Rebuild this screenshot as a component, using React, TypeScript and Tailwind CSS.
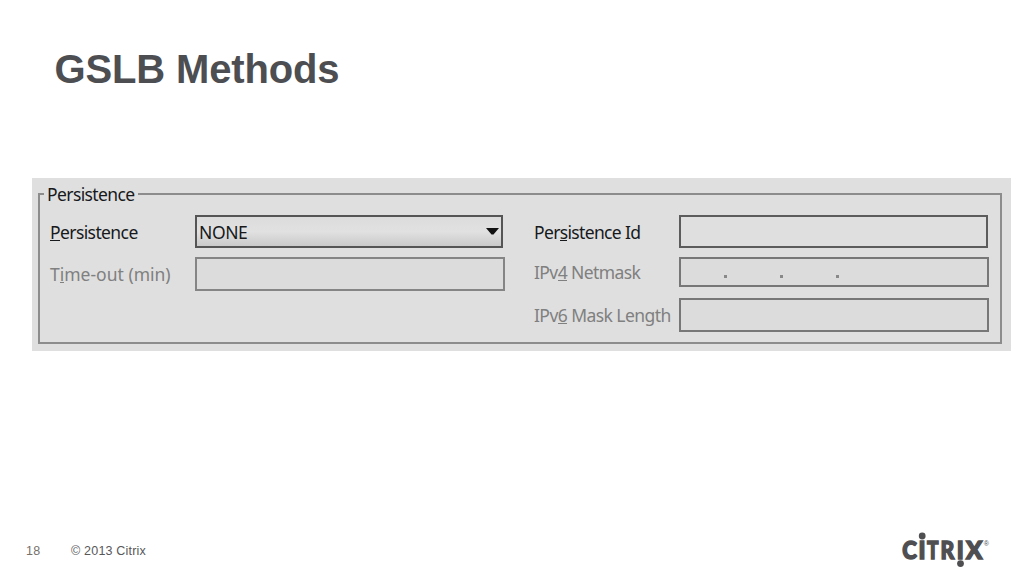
import React from "react";

type LabelProps = {
  before?: string;
  hotkey: string;
  after: string;
  className?: string;
};

function Label({ before = "", hotkey, after, className = "" }: LabelProps) {
  return (
    <span className={`whitespace-pre leading-6 ${className}`}>
      {before}
      <span className="border-b border-current inline-block h-[21px]">{hotkey}</span>
      {after}
    </span>
  );
}

function CitrixLogo() {
  return (
    <svg width="90" height="40" viewBox="900 530 90 40" fill="#4f4f51" aria-label="Citrix">
      <g fontFamily="Lato, sans-serif" fontWeight="900" fontSize="25" stroke="#4f4f51" strokeWidth="1.5">
        <text x="902.3" y="558.5" textLength="14.6" lengthAdjust="spacingAndGlyphs">C</text>
        <text x="918.5" y="558.5" textLength="7" lengthAdjust="spacingAndGlyphs">I</text>
        <text x="927" y="558.5" textLength="11.5" lengthAdjust="spacingAndGlyphs">T</text>
        <text x="940.4" y="558.5" textLength="13.8" lengthAdjust="spacingAndGlyphs">R</text>
        <text x="956.7" y="558.5" textLength="7" lengthAdjust="spacingAndGlyphs">I</text>
        <text x="966" y="558.5" textLength="16.4" lengthAdjust="spacingAndGlyphs">X</text>
      </g>
      <circle cx="922.2" cy="536" r="3.4" />
      <circle cx="960.5" cy="563.6" r="3.4" />
      <text x="983.8" y="546" fontFamily="Liberation Sans, sans-serif" fontSize="7">®</text>
    </svg>
  );
}

function PersistencePanel() {
  return (
    <section className="ml-8 w-[979px] h-[173px] bg-[#dfdfdf] pt-[15px] pl-[6px] font-['Noto_Sans',sans-serif] text-[17.5px] text-[#17191c]">
      <div className="w-[964px] h-[151px] border-2 border-[#8c8c8c]">
        <div className="-mt-[13px] ml-1 h-6 w-[94px] bg-[#dfdfdf] pl-[3px] leading-6 tracking-[-0.6px]">
          Persistence
        </div>
        <div className="flex pl-[10px] pt-[9px]">
          <div className="flex w-[484px] flex-col gap-[9px]">
            <div className="flex h-[33px] items-center">
              <Label hotkey="P" after="ersistence" className="w-[145px] tracking-[-0.6px]" />
              <div className="flex h-full w-[308px] items-center justify-between border-2 border-[#555] bg-linear-to-b from-[#dcdcdc] via-[#e1e1e1] to-[#cacaca] pl-[2px] pr-[2px]">
                <span className="pt-[2px] tracking-[-0.4px]">NONE</span>
                <svg width="13" height="7" viewBox="0 0 13 7">
                  <path d="M0 0h13L7.5 6.5h-2z" fill="#111" />
                </svg>
              </div>
            </div>
            <div className="flex h-[34px] items-center">
              <Label before="T" hotkey="i" after="me-out (min)" className="w-[145px] text-[#808080]" />
              <div className="h-full w-[310px] border-2 border-[#858585] bg-[#dcdcdc]" />
            </div>
          </div>
          <div className="flex flex-col">
            <div className="flex h-[33px] items-center">
              <Label before="Per" hotkey="s" after="istence Id" className="w-[145px] tracking-[-0.66px]" />
              <div className="h-full w-[309px] border-2 border-[#5c5c5c]" />
            </div>
            <div className="mt-[9px] flex h-[30px] items-center">
              <Label before="IPv" hotkey="4" after=" Netmask" className="w-[145px] tracking-[-0.6px] text-[#808080]" />
              <div className="flex h-full w-[310px] items-end gap-[53px] border-2 border-[#777] bg-[#dcdcdc] pb-[7px] pl-[43px]">
                <i className="size-[3px] bg-[#888]" />
                <i className="size-[3px] bg-[#888]" />
                <i className="size-[3px] bg-[#888]" />
              </div>
            </div>
            <div className="mt-[11px] flex h-[34px] items-center">
              <Label before="IPv" hotkey="6" after=" Mask Length" className="w-[145px] tracking-[-0.56px] text-[#808080]" />
              <div className="h-full w-[310px] border-2 border-[#777] bg-[#dcdcdc]" />
            </div>
          </div>
        </div>
      </div>
    </section>
  );
}

export default function App() {
  return (
    <main className="flex h-[576px] w-[1024px] flex-col overflow-hidden bg-white font-['Liberation_Sans',Arial,sans-serif]">
      <h1 className="h-[178px] pl-[54.5px] pt-[45px] text-[40px] leading-[48px] font-bold tracking-[-0.14px] text-[#4d4e51]">
        GSLB Methods
      </h1>
      <PersistencePanel />
      <footer className="mt-[179px] flex h-10 items-center pl-[26px] text-[12.5px] text-[#58585a]">
        <span className="w-[45px] pt-[3px] tracking-[0.2px] text-[#77716a]">18</span>
        <span className="w-[829px] pt-[2px] tracking-[0.2px]">© 2013 Citrix</span>
        <CitrixLogo />
      </footer>
    </main>
  );
}
